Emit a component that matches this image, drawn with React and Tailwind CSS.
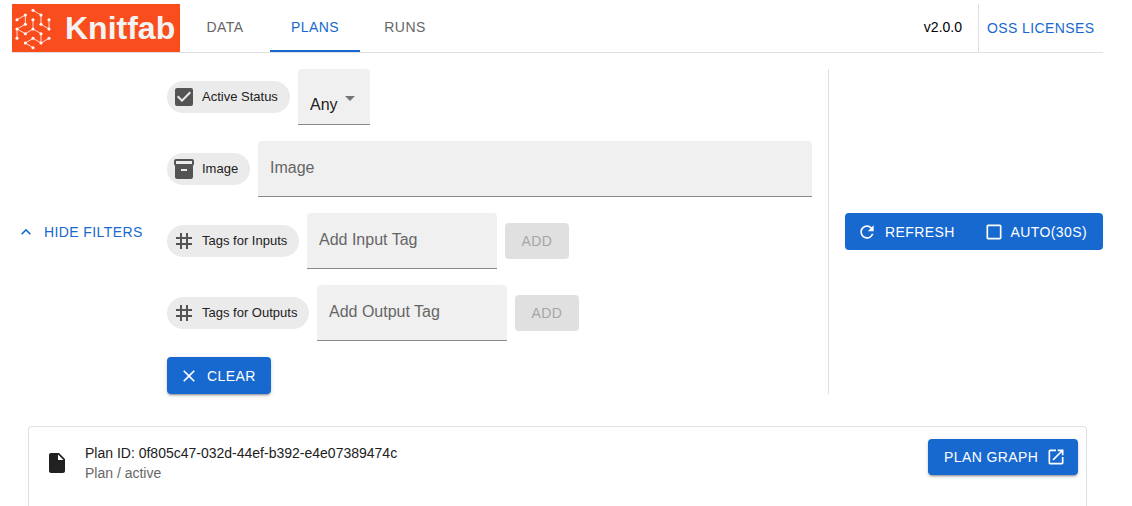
import React from "react";
import {
  MdArrowDropDown,
  MdCheckBox,
  MdCheckBoxOutlineBlank,
  MdClose,
  MdExpandLess,
  MdInsertDriveFile,
  MdInventory2,
  MdOpenInNew,
  MdRefresh,
  MdTag,
} from "react-icons/md";

const NODES = [
  [69, 25], [93, 39], [46, 39], [21, 53], [46, 67], [21, 81], [46, 95],
  [69, 53], [69, 81], [93, 67], [117, 53], [117, 81], [93, 95], [21, 109],
  [117, 109], [93, 123], [69, 109], [46, 123], [69, 137],
];

function Logo() {
  return (
    <div className="flex h-12 w-[168px] items-center bg-[#f94d1d]">
      <svg viewBox="6 6 132 144" className="h-12 w-11 shrink-0">
        <path
          d="M46 39 21 53M46 39V67L21 81V109M21 81 46 95 69 81V53M69 81 93 95V123M69 25 93 39V67L117 81V53M117 109 93 123 69 109 46 123 69 137"
          fill="none"
          stroke="#ffd9cd"
          strokeWidth="3"
        />
        {NODES.map(([x, y]) => (
          <circle key={`${x}-${y}`} cx={x} cy={y} r="4.6" fill="#fff" />
        ))}
      </svg>
      <span className="ml-[9px] whitespace-nowrap text-[32px] leading-none font-bold text-[#f3f3f3]">
        Knitfab
      </span>
    </div>
  );
}

function Tab({ label, active }) {
  return (
    <button
      className={
        "flex h-12 w-[90px] items-center justify-center border-b-2 text-sm tracking-[0.4px] " +
        (active ? "border-[#1769cf] text-[#1769cf]" : "border-transparent text-[#666]")
      }
    >
      {label}
    </button>
  );
}

function Chip({ icon: Icon, label, width }) {
  return (
    <div className={"flex h-8 shrink-0 items-center gap-1.5 rounded-full bg-[#ebebeb] pl-[5px] " + width}>
      <Icon className="size-6 shrink-0 text-[#545454]" />
      <span className="text-[13px] whitespace-nowrap text-[#212121]">{label}</span>
    </div>
  );
}

function Field({ label, width }) {
  return (
    <div className={"h-14 rounded-t border-b border-[#8a8a8a] bg-[#f0f0f0] px-3 pt-[15px] " + width}>
      <span className="block text-base leading-6 text-[#666]">{label}</span>
    </div>
  );
}

function AddButton() {
  return (
    <button className="flex h-9 w-16 items-center justify-center rounded bg-[#e0e0e0] text-sm tracking-[0.4px] text-[#a6a6a6]">
      ADD
    </button>
  );
}

const RAISED =
  "shadow-[0_3px_1px_-2px_rgba(0,0,0,0.2),0_2px_2px_0_rgba(0,0,0,0.14),0_1px_5px_0_rgba(0,0,0,0.12)]";

export default function App() {
  return (
    <div
      className="flex h-[506px] w-[1132px] flex-col overflow-hidden bg-white pt-1 pr-[29px] pl-3 text-[#212121]"
      style={{ fontFamily: '"Liberation Sans", Arial, sans-serif' }}
    >
      <header className="flex h-[49px] shrink-0 border-b border-[#e0e0e0]">
        <Logo />
        <nav className="flex flex-1">
          <Tab label="DATA" />
          <Tab label="PLANS" active />
          <Tab label="RUNS" />
        </nav>
        <div className="flex items-center pr-4 pb-0.5 text-sm text-black">v2.0.0</div>
        <a className="flex w-[125px] items-center border-l border-[#e0e0e0] pl-2 text-sm tracking-[0.4px] whitespace-nowrap text-[#1769cf]">
          OSS LICENSES
        </a>
      </header>

      <section className="mt-4 flex h-[325px] shrink-0 items-center">
        <button className="flex w-[155px] items-center pl-1 text-sm tracking-[0.4px] whitespace-nowrap text-[#1769cf]">
          <MdExpandLess className="mr-2 size-5" />
          HIDE FILTERS
        </button>
        <div className="flex h-full w-[645px] flex-col gap-4">
          <div className="flex items-center gap-2">
            <Chip icon={MdCheckBox} label="Active Status" width="w-[123px]" />
            <div className="flex h-14 w-[72px] rounded-t border-b border-[#8a8a8a] bg-[#f0f0f0] pl-3">
              <span className="pt-6 text-base leading-6">Any</span>
              <MdArrowDropDown className="mt-[17px] size-6 text-[#757575]" />
            </div>
          </div>
          <div className="flex items-center gap-2">
            <Chip icon={MdInventory2} label="Image" width="w-[83px]" />
            <Field label="Image" width="flex-1" />
          </div>
          <div className="flex items-center gap-2">
            <Chip icon={MdTag} label="Tags for Inputs" width="w-[132px]" />
            <Field label="Add Input Tag" width="w-[190px]" />
            <AddButton />
          </div>
          <div className="flex items-center gap-2">
            <Chip icon={MdTag} label="Tags for Outputs" width="w-[142px]" />
            <Field label="Add Output Tag" width="w-[190px]" />
            <AddButton />
          </div>
          <button
            className={
              "flex h-[37px] w-[104px] items-center gap-2 rounded bg-[#1769cf] pl-3 text-sm tracking-[0.4px] text-white " +
              RAISED
            }
          >
            <MdClose className="size-5" />
            CLEAR
          </button>
        </div>
        <div className="mx-4 h-full w-px bg-[#e0e0e0]" />
        <div className="flex h-[37px] flex-1 items-center rounded bg-[#1769cf] pl-3 text-sm tracking-[0.4px] whitespace-nowrap text-white">
          <MdRefresh className="mr-2 size-5" />
          REFRESH
          <MdCheckBoxOutlineBlank className="mr-[7px] ml-auto size-5" />
          <span className="pr-4">AUTO(30S)</span>
        </div>
      </section>

      <section className="mt-8 mr-4 ml-4 flex flex-1 items-start rounded-t border border-b-0 border-[#e0e0e0] pt-3 pr-2 pl-4">
        <MdInsertDriveFile className="mt-3 size-6" />
        <div className="ml-4 flex-1 pt-1 text-sm leading-5">
          <div>Plan ID: 0f805c47-032d-44ef-b392-e4e07389474c</div>
          <div className="text-[#666]">Plan / active</div>
        </div>
        <button
          className={
            "flex h-9 w-[150px] items-center gap-2 rounded bg-[#1769cf] pl-4 text-sm tracking-[0.4px] whitespace-nowrap text-white " +
            RAISED
          }
        >
          PLAN GRAPH
          <MdOpenInNew className="size-5" />
        </button>
      </section>
    </div>
  );
}
